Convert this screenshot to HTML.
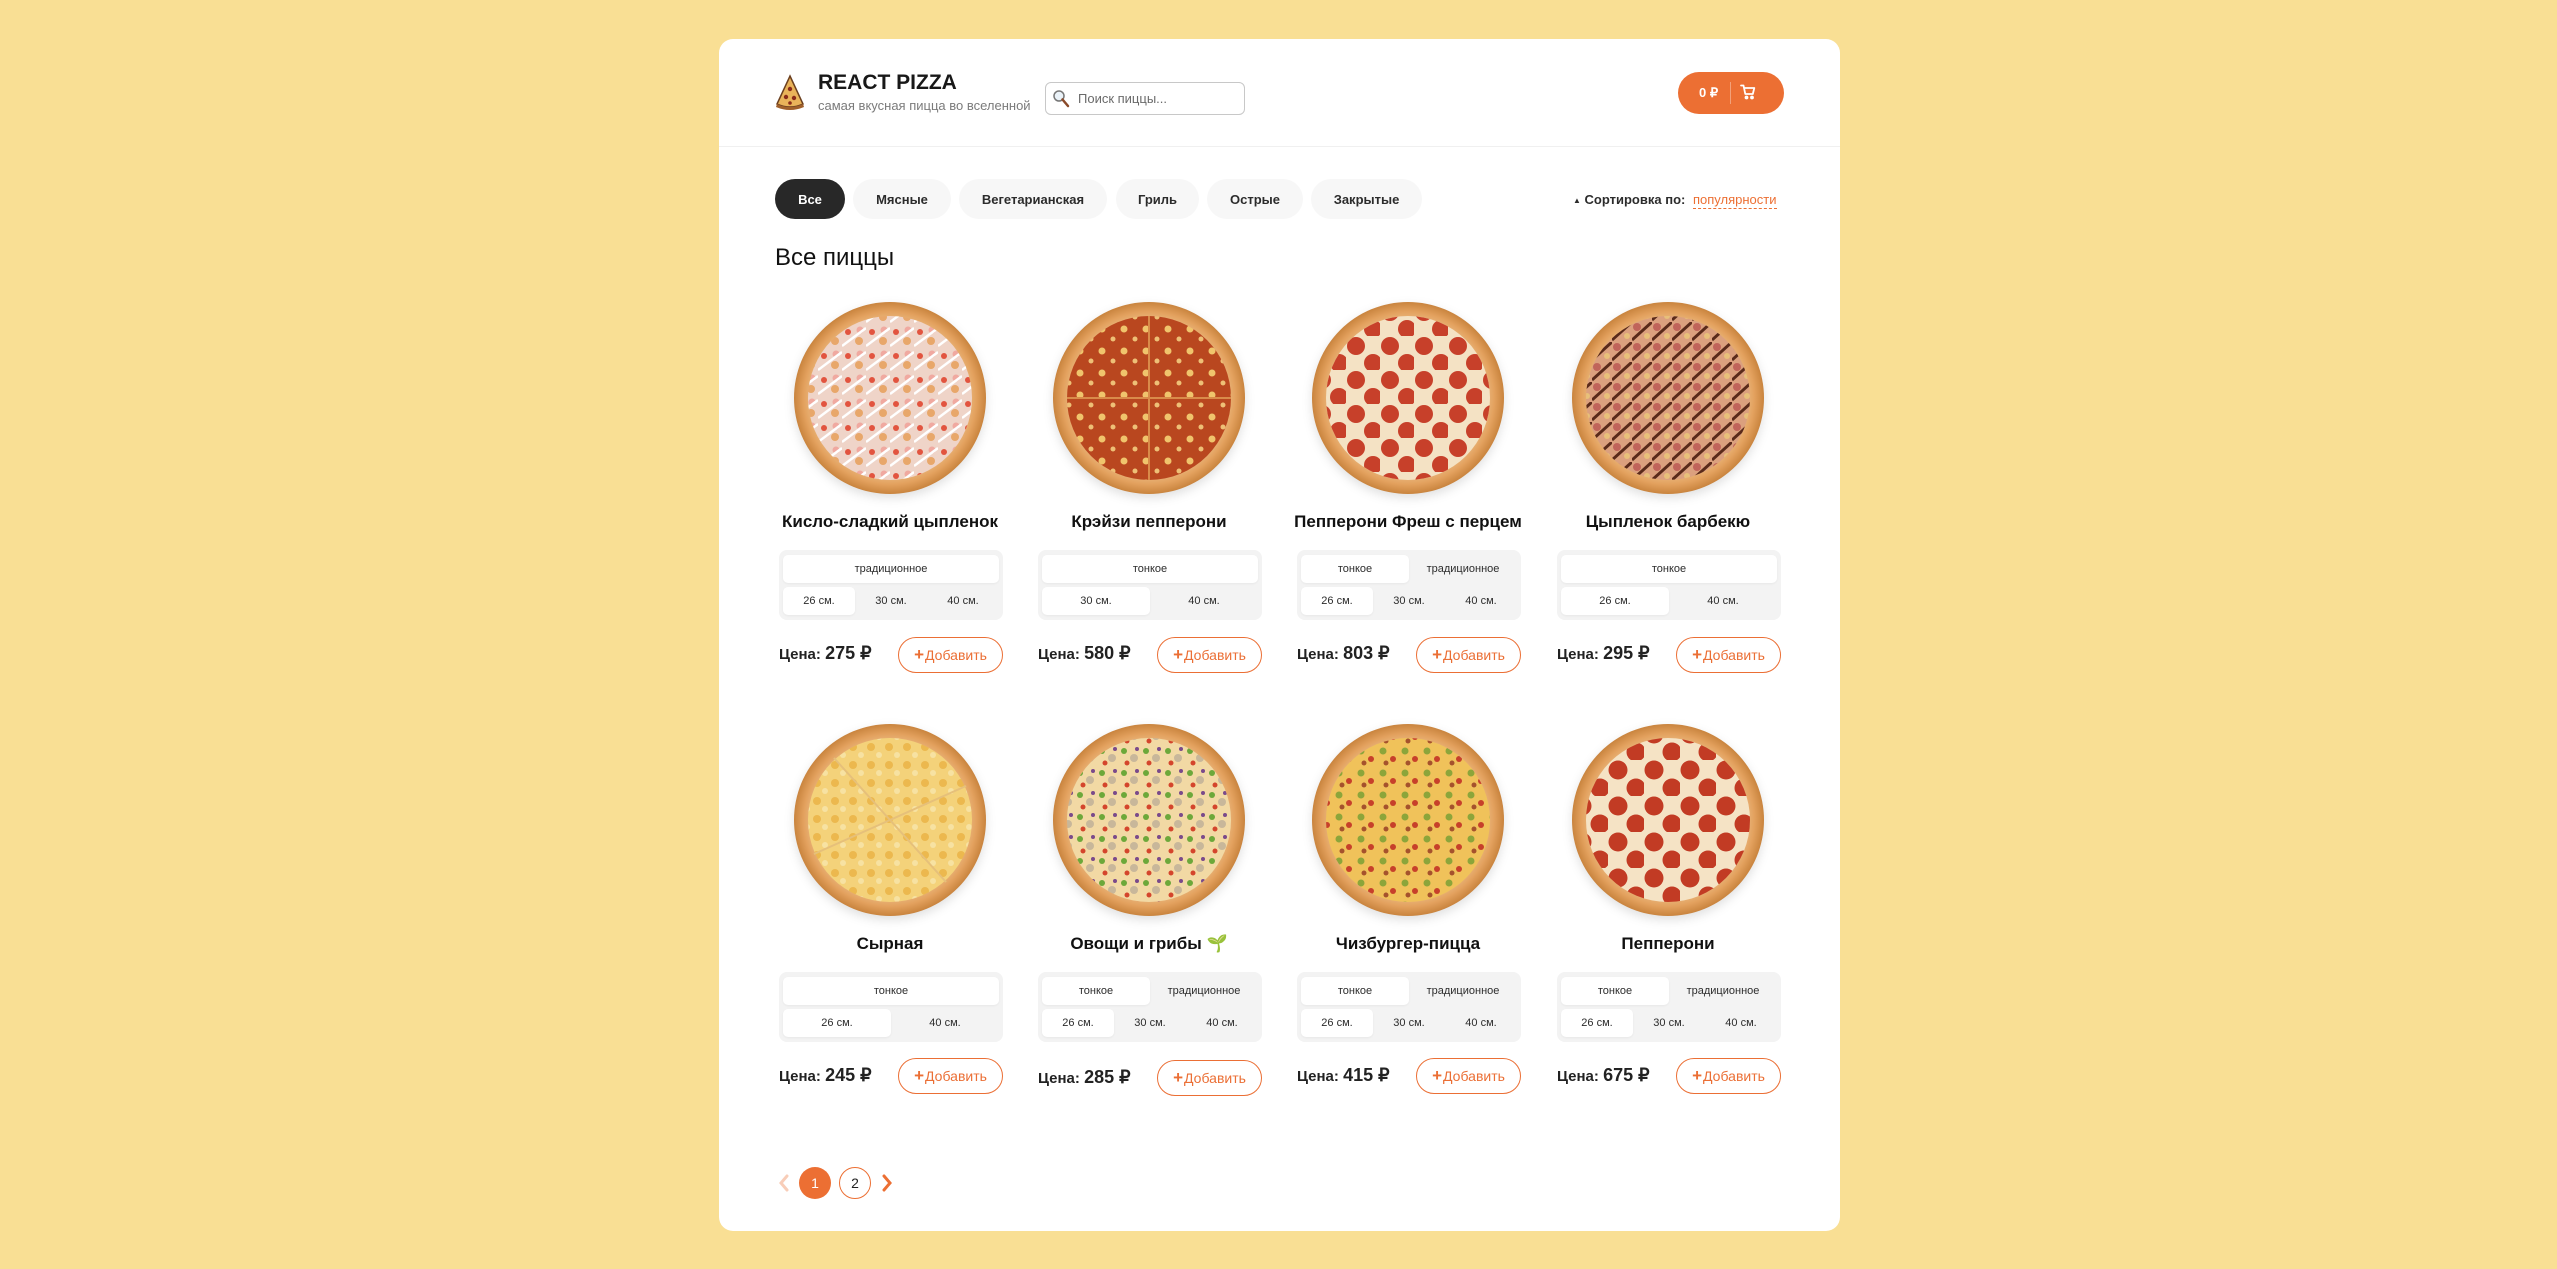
<!DOCTYPE html>
<html><head><meta charset="utf-8"><style>
*{box-sizing:border-box;margin:0;padding:0}
body{width:2557px;height:1269px;background:#f9df94;font-family:"Liberation Sans",sans-serif;position:relative;overflow:hidden;color:#1a1a1a}
.wrap{position:absolute;left:719px;top:39px;width:1121px;height:1192px;background:#fff;border-radius:14px}
.a{position:absolute}
.pill{position:absolute;top:179px;height:40px;border-radius:20px;background:#f7f7f7;font-size:13px;font-weight:bold;display:flex;align-items:center;justify-content:center;color:#2c2c2c}
.title{position:absolute;width:230px;text-align:center;font-size:17px;font-weight:bold;color:#111}
.box{position:absolute;width:224px;height:70px;background:#f3f3f3;border-radius:8px}
.row{position:absolute;left:4px;right:4px;height:28px;display:flex}
.row div{flex:1;display:flex;align-items:center;justify-content:center;font-size:11px;color:#2c2c2c;border-radius:5px}
.row .on{background:#fff;box-shadow:0 1px 2px rgba(0,0,0,.05)}
.price{position:absolute;font-size:15px;font-weight:bold;color:#222}
.price b{font-size:18px}
.btn{position:absolute;width:105px;height:36px;border:1.5px solid #eb6f35;border-radius:18px;color:#eb6f35;font-size:14px;display:flex;align-items:center;justify-content:center}
.btn span{font-weight:bold;font-size:17px;margin-right:1px}
svg.p{position:absolute;width:192px;height:192px;filter:drop-shadow(0 4px 5px rgba(0,0,0,.12))}
</style></head><body>
<div class="wrap"></div>
<!-- header -->
<svg class="a" style="left:775px;top:74px" width="30" height="36" viewBox="0 0 30 36"><path d="M15 2 L28 30 Q15 36 2 30 Z" fill="#e9b35a" stroke="#6b3f1f" stroke-width="1.5"/><path d="M2 30 Q15 36 28 30 L29 33 Q15 39 1 33Z" fill="#a0602b"/><circle cx="15" cy="15" r="2.2" fill="#8a2b1a"/><circle cx="11" cy="23" r="2.2" fill="#8a2b1a"/><circle cx="19" cy="24" r="2.2" fill="#8a2b1a"/><circle cx="15" cy="29" r="1.8" fill="#8a2b1a"/></svg>
<div class="a" style="left:818px;top:71px;font-size:21px;font-weight:bold;color:#181818">REACT PIZZA</div>
<div class="a" style="left:818px;top:98px;font-size:13px;color:#7b7b7b">самая вкусная пицца во вселенной</div>
<div class="a" style="left:1045px;top:82px;width:200px;height:33px;border:1.5px solid #c8c8c8;border-radius:6px"></div>
<svg class="a" style="left:1052px;top:89px" width="18" height="20" viewBox="0 0 18 20"><circle cx="7" cy="7" r="5" fill="#eaf2f8" stroke="#777" stroke-width="1.5"/><path d="M10.5 10.5 L16 17" stroke="#8a4a2a" stroke-width="2.5" stroke-linecap="round"/></svg>
<div class="a" style="left:1078px;top:91px;font-size:13px;color:#6a6a6a">Поиск пиццы...</div>
<div class="a" style="left:1678px;top:72px;width:106px;height:42px;border-radius:21px;background:#ec6f33"></div>
<div class="a" style="left:1699px;top:85px;font-size:13px;font-weight:bold;color:#fff">0 ₽</div>
<div class="a" style="left:1730px;top:82px;width:1px;height:22px;background:rgba(255,255,255,.35)"></div>
<svg class="a" style="left:1740px;top:84px" width="16" height="16" viewBox="0 0 16 16" fill="none" stroke="#fff" stroke-width="1.8" stroke-linecap="round" stroke-linejoin="round"><path d="M1 1.5h2.5l1.8 8.5h7.5l1.5-6H4.2"/><circle cx="6.5" cy="13.5" r="1"/><circle cx="12" cy="13.5" r="1"/></svg>
<div class="a" style="left:719px;top:146px;width:1121px;height:1px;background:#f0f0f0"></div>
<!-- categories -->
<div class="pill" style="left:775px;width:70px;background:#282828;color:#fff">Все</div>
<div class="pill" style="left:853px;width:98px">Мясные</div>
<div class="pill" style="left:959px;width:148px">Вегетарианская</div>
<div class="pill" style="left:1116px;width:83px">Гриль</div>
<div class="pill" style="left:1207px;width:96px">Острые</div>
<div class="pill" style="left:1311px;width:111px">Закрытые</div>
<div class="a" style="left:1573px;top:192px;font-size:13px;font-weight:bold;color:#2c2c2c"><span style="font-size:8px;vertical-align:1px">▲</span> Сортировка по:</div>
<div class="a" style="left:1693px;top:192px;font-size:13px;color:#ec6f33;border-bottom:1.5px dashed #ec6f33;padding-bottom:1px">популярности</div>
<div class="a" style="left:775px;top:244px;font-size:24px;color:#111">Все пиццы</div>

<svg width="0" height="0" style="position:absolute"><defs>
<radialGradient id="crust"><stop offset="0.83" stop-color="#e8b276"/><stop offset="0.9" stop-color="#e3a15e"/><stop offset="1" stop-color="#c9843e"/></radialGradient>
<pattern id="pep" width="34" height="34" patternUnits="userSpaceOnUse"><circle cx="10" cy="10" r="9" fill="#c7402a"/><circle cx="27" cy="27" r="9" fill="#c7402a"/></pattern>
<pattern id="crazy" width="22" height="22" patternUnits="userSpaceOnUse"><rect width="22" height="22" fill="#b9471f"/><circle cx="5" cy="5" r="3.5" fill="#f0c46c"/><circle cx="16" cy="15" r="2.5" fill="#eec076"/></pattern>
<pattern id="chick" width="24" height="24" patternUnits="userSpaceOnUse"><rect width="24" height="24" fill="#efd4c8"/><circle cx="6" cy="6" r="3" fill="#e2543f"/><circle cx="17" cy="15" r="4" fill="#e8a76a"/><circle cx="18" cy="4" r="3.5" fill="#f0a9a0"/><path d="M0 20 L24 2" stroke="#fff" stroke-width="2.5"/></pattern>
<pattern id="bbq" width="20" height="20" patternUnits="userSpaceOnUse"><rect width="20" height="20" fill="#dba07e"/><circle cx="5" cy="5" r="4" fill="#c0645a"/><path d="M0 18 L20 0" stroke="#5a2a1a" stroke-width="3"/><circle cx="15" cy="14" r="3" fill="#e8c07a"/></pattern>
<pattern id="cheese" width="18" height="18" patternUnits="userSpaceOnUse"><rect width="18" height="18" fill="#f4d27a"/><circle cx="5" cy="5" r="4" fill="#ecb84e"/><circle cx="13" cy="13" r="3" fill="#f7e2a2"/></pattern>
<pattern id="veg" width="22" height="22" patternUnits="userSpaceOnUse"><rect width="22" height="22" fill="#f2d9a4"/><circle cx="5" cy="5" r="3" fill="#6da83a"/><circle cx="15" cy="12" r="4" fill="#c8b79a"/><circle cx="8" cy="17" r="2.5" fill="#d4452c"/><circle cx="18" cy="3" r="2" fill="#7a4a8a"/></pattern>
<pattern id="burg" width="22" height="22" patternUnits="userSpaceOnUse"><rect width="22" height="22" fill="#f0c25a"/><circle cx="5" cy="5" r="3.5" fill="#8ca53a"/><circle cx="15" cy="13" r="3" fill="#c7402a"/><circle cx="8" cy="17" r="2.5" fill="#a5522c"/></pattern>
<pattern id="pep2" width="36" height="36" patternUnits="userSpaceOnUse"><rect width="36" height="36" fill="#f5e3c5"/><circle cx="10" cy="10" r="9.5" fill="#c23b24"/><circle cx="28" cy="28" r="9.5" fill="#c23b24"/></pattern>
</defs></svg>

<!-- Row 1 -->
<svg class="p" style="left:794px;top:302px" viewBox="0 0 192 192"><circle cx="96" cy="96" r="96" fill="url(#crust)"/><circle cx="96" cy="96" r="82" fill="url(#chick)"/></svg>
<svg class="p" style="left:1053px;top:302px" viewBox="0 0 192 192"><circle cx="96" cy="96" r="96" fill="url(#crust)"/><circle cx="96" cy="96" r="82" fill="url(#crazy)"/><path d="M96 14V178M14 96H178" stroke="#d98b4a" stroke-width="2"/></svg>
<svg class="p" style="left:1312px;top:302px" viewBox="0 0 192 192"><circle cx="96" cy="96" r="96" fill="url(#crust)"/><circle cx="96" cy="96" r="82" fill="#f4e2c4"/><circle cx="96" cy="96" r="82" fill="url(#pep)"/></svg>
<svg class="p" style="left:1572px;top:302px" viewBox="0 0 192 192"><circle cx="96" cy="96" r="96" fill="url(#crust)"/><circle cx="96" cy="96" r="82" fill="url(#bbq)"/></svg>

<div class="title" style="left:775px;top:512px">Кисло-сладкий цыпленок</div>
<div class="title" style="left:1034px;top:512px">Крэйзи пепперони</div>
<div class="title" style="left:1293px;top:512px">Пепперони Фреш с перцем</div>
<div class="title" style="left:1553px;top:512px">Цыпленок барбекю</div>

<div class="box" style="left:779px;top:550px"><div class="row" style="top:5px"><div class="on">традиционное</div></div><div class="row" style="top:37px"><div class="on">26 см.</div><div>30 см.</div><div>40 см.</div></div></div>
<div class="box" style="left:1038px;top:550px"><div class="row" style="top:5px"><div class="on">тонкое</div></div><div class="row" style="top:37px"><div class="on">30 см.</div><div>40 см.</div></div></div>
<div class="box" style="left:1297px;top:550px"><div class="row" style="top:5px"><div class="on">тонкое</div><div>традиционное</div></div><div class="row" style="top:37px"><div class="on">26 см.</div><div>30 см.</div><div>40 см.</div></div></div>
<div class="box" style="left:1557px;top:550px"><div class="row" style="top:5px"><div class="on">тонкое</div></div><div class="row" style="top:37px"><div class="on">26 см.</div><div>40 см.</div></div></div>

<div class="price" style="left:779px;top:643px">Цена: <b>275 ₽</b></div>
<div class="price" style="left:1038px;top:643px">Цена: <b>580 ₽</b></div>
<div class="price" style="left:1297px;top:643px">Цена: <b>803 ₽</b></div>
<div class="price" style="left:1557px;top:643px">Цена: <b>295 ₽</b></div>
<div class="btn" style="left:898px;top:637px"><span>+</span>Добавить</div>
<div class="btn" style="left:1157px;top:637px"><span>+</span>Добавить</div>
<div class="btn" style="left:1416px;top:637px"><span>+</span>Добавить</div>
<div class="btn" style="left:1676px;top:637px"><span>+</span>Добавить</div>

<!-- Row 2 -->
<svg class="p" style="left:794px;top:724px" viewBox="0 0 192 192"><circle cx="96" cy="96" r="96" fill="url(#crust)"/><circle cx="96" cy="96" r="82" fill="url(#cheese)"/><path d="M20 130L172 62M40 34L152 158" stroke="#e6c07a" stroke-width="2"/></svg>
<svg class="p" style="left:1053px;top:724px" viewBox="0 0 192 192"><circle cx="96" cy="96" r="96" fill="url(#crust)"/><circle cx="96" cy="96" r="82" fill="url(#veg)"/></svg>
<svg class="p" style="left:1312px;top:724px" viewBox="0 0 192 192"><circle cx="96" cy="96" r="96" fill="url(#crust)"/><circle cx="96" cy="96" r="82" fill="url(#burg)"/></svg>
<svg class="p" style="left:1572px;top:724px" viewBox="0 0 192 192"><circle cx="96" cy="96" r="96" fill="url(#crust)"/><circle cx="96" cy="96" r="82" fill="url(#pep2)"/></svg>

<div class="title" style="left:775px;top:934px">Сырная</div>
<div class="title" style="left:1034px;top:934px">Овощи и грибы 🌱</div>
<div class="title" style="left:1293px;top:934px">Чизбургер-пицца</div>
<div class="title" style="left:1553px;top:934px">Пепперони</div>

<div class="box" style="left:779px;top:972px"><div class="row" style="top:5px"><div class="on">тонкое</div></div><div class="row" style="top:37px"><div class="on">26 см.</div><div>40 см.</div></div></div>
<div class="box" style="left:1038px;top:972px"><div class="row" style="top:5px"><div class="on">тонкое</div><div>традиционное</div></div><div class="row" style="top:37px"><div class="on">26 см.</div><div>30 см.</div><div>40 см.</div></div></div>
<div class="box" style="left:1297px;top:972px"><div class="row" style="top:5px"><div class="on">тонкое</div><div>традиционное</div></div><div class="row" style="top:37px"><div class="on">26 см.</div><div>30 см.</div><div>40 см.</div></div></div>
<div class="box" style="left:1557px;top:972px"><div class="row" style="top:5px"><div class="on">тонкое</div><div>традиционное</div></div><div class="row" style="top:37px"><div class="on">26 см.</div><div>30 см.</div><div>40 см.</div></div></div>

<div class="price" style="left:779px;top:1065px">Цена: <b>245 ₽</b></div>
<div class="price" style="left:1038px;top:1067px">Цена: <b>285 ₽</b></div>
<div class="price" style="left:1297px;top:1065px">Цена: <b>415 ₽</b></div>
<div class="price" style="left:1557px;top:1065px">Цена: <b>675 ₽</b></div>
<div class="btn" style="left:898px;top:1058px"><span>+</span>Добавить</div>
<div class="btn" style="left:1157px;top:1060px"><span>+</span>Добавить</div>
<div class="btn" style="left:1416px;top:1058px"><span>+</span>Добавить</div>
<div class="btn" style="left:1676px;top:1058px"><span>+</span>Добавить</div>

<!-- pagination -->
<svg class="a" style="left:778px;top:1173px" width="12" height="20" viewBox="0 0 12 20"><path d="M9 3L3 10L9 17" fill="none" stroke="#f8cdb8" stroke-width="3" stroke-linecap="round"/></svg>
<div class="a" style="left:799px;top:1167px;width:32px;height:32px;border-radius:50%;background:#ec6f33;color:#fff;font-size:14px;display:flex;align-items:center;justify-content:center">1</div>
<div class="a" style="left:839px;top:1167px;width:32px;height:32px;border-radius:50%;border:1.5px solid #ec6f33;color:#222;font-size:14px;display:flex;align-items:center;justify-content:center">2</div>
<svg class="a" style="left:881px;top:1173px" width="12" height="20" viewBox="0 0 12 20"><path d="M3 3L9 10L3 17" fill="none" stroke="#ec6f33" stroke-width="3" stroke-linecap="round"/></svg>
</body></html>
